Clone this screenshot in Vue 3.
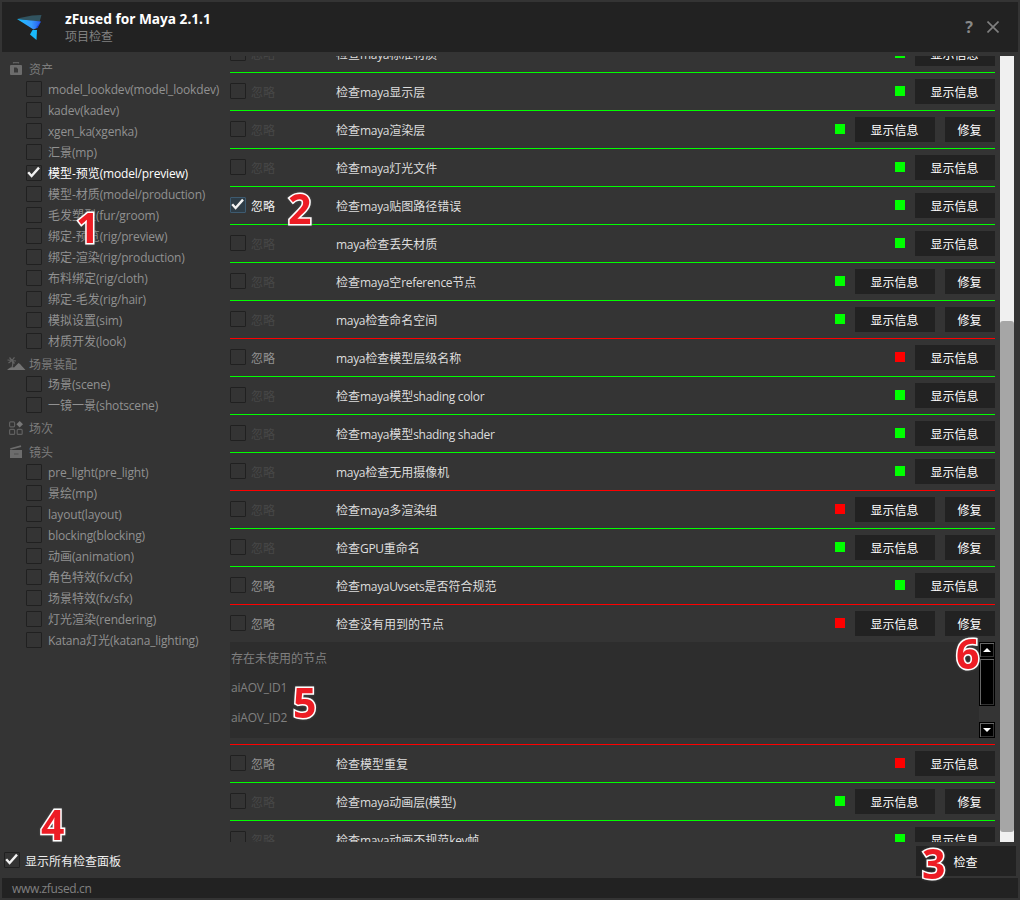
<script setup>
const groups = [
  {
    name: '资产', icon: 'asset',
    items: ['model_lookdev(model_lookdev)', 'kadev(kadev)', 'xgen_ka(xgenka)', '汇景(mp)', '模型-预览(model/preview)', '模型-材质(model/production)', '毛发塑型(fur/groom)', '绑定-预览(rig/preview)', '绑定-渲染(rig/production)', '布料绑定(rig/cloth)', '绑定-毛发(rig/hair)', '模拟设置(sim)', '材质开发(look)'],
  },
  { name: '场景装配', icon: 'scene', items: ['场景(scene)', '一镜一景(shotscene)'] },
  { name: '场次', icon: 'sequence', items: [] },
  {
    name: '镜头', icon: 'shot',
    items: ['pre_light(pre_light)', '景绘(mp)', 'layout(layout)', 'blocking(blocking)', '动画(animation)', '角色特效(fx/cfx)', '场景特效(fx/sfx)', '灯光渲染(rendering)', 'Katana灯光(katana_lighting)'],
  },
]
const selected = '模型-预览(model/preview)'

const checks = [
  { title: '检查maya标准材质' },
  { title: '检查maya显示层' },
  { title: '检查maya渲染层', fix: true },
  { title: '检查maya灯光文件' },
  { title: '检查maya贴图路径错误', checked: true },
  { title: 'maya检查丢失材质' },
  { title: '检查maya空reference节点', fix: true },
  { title: 'maya检查命名空间', fix: true },
  { title: 'maya检查模型层级名称', bad: true, enabled: true },
  { title: '检查maya模型shading color' },
  { title: '检查maya模型shading shader' },
  { title: 'maya检查无用摄像机' },
  { title: '检查maya多渲染组', fix: true, bad: true },
  { title: '检查GPU重命名', fix: true },
  { title: '检查mayaUvsets是否符合规范', enabled: true },
  { title: '检查没有用到的节点', fix: true, bad: true, enabled: true, log: ['存在未使用的节点', 'aiAOV_ID1', 'aiAOV_ID2'] },
  { title: '检查模型重复', bad: true, enabled: true },
  { title: '检查maya动画层(模型)', fix: true },
  { title: '检查maya动画不规范key帧' },
]
const tick = 'M2.2 8.2 L5.6 12 L13 3.6'

// Splits a label into Latin and CJK runs, so that Latin runs can be set tighter.
const runs = (text) =>
  text.match(/[\x20-\x7e]+|[^\x20-\x7e]+/g).map((t) => ({ t, latin: t.charCodeAt(0) < 127 }))
</script>

<template>
  <div class="window">
    <header class="titlebar">
      <svg class="logo" width="26" height="26" viewBox="0 0 26 26">
        <defs>
          <linearGradient id="wing" x1="0" x2="1" y1="0" y2="0">
            <stop offset="0" stop-color="#17c4ff" />
            <stop offset="0.6" stop-color="#379bff" />
            <stop offset="1" stop-color="#2456f0" />
          </linearGradient>
        </defs>
        <path d="M0 6.500 L15 3.500 L24.500 3 L22.500 10 Z" fill="#31535f" />
        <path d="M0 7 L24 9.500 L20 16 L16.500 17.500 Z" fill="url(#wing)" />
        <path d="M19 15.500 L24 9.500 L20.500 16 Z" fill="#1d45e0" />
        <path d="M15.500 18 L20 18 L19.500 28 L13 22.500 Z" fill="#19b9fb" />
      </svg>
      <div class="heading">
        <div class="app-name">zFused for Maya 2.1.1</div>
        <div class="sub">项目检查</div>
      </div>
      <div class="help">?</div>
      <svg class="close" width="12" height="12" viewBox="0 0 12 12"><path d="M.5 .5 L11.5 11.5 M11.5 .5 L.5 11.5" stroke="#808080" stroke-width="1.6" fill="none" /></svg>
    </header>

    <main class="body">
      <aside class="sidebar">
        <section v-for="g in groups" :key="g.name" class="group">
          <div class="group-head">
            <svg class="gicon" width="20" height="16" viewBox="0 0 20 16">
              <g v-if="g.icon === 'asset'">
                <path d="M7.500 1.500 V.6 H12.500 V1.500" stroke="#606060" stroke-width="1.2" fill="none" />
                <rect x="4" y="3" width="12" height="10" rx="1" fill="#6c6c6c" />
                <path d="M8 5.500 H10.500 L12 7 V10.500 H8 Z" fill="#393939" />
              </g>
              <g v-else-if="g.icon === 'scene'">
                <path d="M1 13 C3 11 5 10 6.500 10 L8 10.500 L12.500 6 L14 7 L19.500 13 Z" fill="#737373" />
                <path d="M6 10.500 C7 7.500 7 5 6 3.500 M6 3.500 L1.500 3 M6 3.500 L2.500 6 M6 3.500 L3.500 .5 M6 3.500 L8.500 .3 M6 3.500 L10 4 M6 3.500 L8.500 6.500" stroke="#626262" stroke-width="1.2" fill="none" />
              </g>
              <g v-else-if="g.icon === 'sequence'" fill="none" stroke="#606060" stroke-width="1.2">
                <rect x="3.600" y=".8" width="5" height="5" rx="1" />
                <rect x="3.600" y="8.400" width="5" height="5" rx="1" />
                <rect x="11.200" y="8.400" width="5" height="5" rx="1" />
                <path d="M13.700 0 L17 3.300 L13.700 6.600 L10.400 3.300 Z" fill="#777" stroke="none" />
              </g>
              <g v-else>
                <path d="M4.300 4 L15 1.200" stroke="#6c6c6c" stroke-width="1.800" />
                <path d="M4 5 H16 V13 H4 Z" fill="#6c6c6c" />
                <path d="M8 9 H12.500" stroke="#5b5b5b" stroke-width="1.600" />
              </g>
            </svg>
            <span>{{ g.name }}</span>
          </div>
          <div class="group-items">
            <div v-for="it in g.items" :key="it" class="item" :class="{ on: it === selected }">
              <span class="box"><svg v-if="it === selected" viewBox="0 0 16 16"><path :d="tick" /></svg></span>
              <span class="label"><span v-for="(r, i) in runs(it)" :key="i" :class="{ latin: r.latin }">{{ r.t }}</span></span>
            </div>
          </div>
        </section>
      </aside>

      <div class="scroll">
        <div class="list">
          <div v-for="c in checks" :key="c.title" class="check" :class="{ bad: c.bad }">
            <div class="row">
              <span class="box" :class="{ focus: c.checked }"><svg v-if="c.checked" viewBox="0 0 16 16"><path :d="tick" /></svg></span>
              <span class="ignore" :class="{ enabled: c.enabled, checked: c.checked }">忽略</span>
              <span class="title"><span v-for="(r, i) in runs(c.title)" :key="i" :class="{ latin: r.latin }">{{ r.t }}</span></span>
              <span class="status"></span>
              <span class="btn info">显示信息</span>
              <span v-if="c.fix" class="btn fix">修复</span>
            </div>
            <div v-if="c.log" class="log">
              <div class="log-lines"><p v-for="l in c.log" :key="l">{{ l }}</p></div>
              <div class="log-bar">
                <span class="arrow"><svg width="8" height="4" viewBox="0 0 8 4"><path d="M0 4 L4 0 L8 4Z" /></svg></span>
                <span class="handle"></span>
                <span class="arrow down"><svg width="8" height="4" viewBox="0 0 8 4"><path d="M0 0 L4 4 L8 0Z" /></svg></span>
              </div>
            </div>
          </div>
        </div>
      </div>
      <div class="bar"><div class="thumb"></div></div>
    </main>

    <div class="actions">
      <span class="box"><svg viewBox="0 0 16 16"><path :d="tick" /></svg></span>
      <span class="show-all">显示所有检查面板</span>
      <span class="run">检查</span>
    </div>
    <footer class="footer">www.zfused.cn</footer>

    <span class="mark m1">1</span>
    <span class="mark m2">2</span>
    <span class="mark m3">3</span>
    <span class="mark m4">4</span>
    <span class="mark m5">5</span>
    <span class="mark m6">6</span>
  </div>
</template>

<style>
body { background: #343434; }
</style>

<style scoped>
.window {
  position: relative;
  box-sizing: border-box;
  width: 1020px;
  height: 900px;
  padding: 2px;
  overflow: hidden;
  display: flex;
  flex-direction: column;
  background: #343434;
  color: #919191;
  font: 12px/16px "Open Sans", "Noto Sans CJK SC", sans-serif;
  white-space: nowrap;
}
.titlebar { height: 50px; flex: none; display: flex; background: #222; }
.logo { margin: 10px 0 0 15px; overflow: visible; }
.heading { flex: 1; margin: 8px 0 0 22px; }
.app-name { font: 700 13.7px/18px "Noto Sans", sans-serif; color: #fff; }
.sub { line-height: 17px; color: #808080; }
.help { margin: 16px 14px 0 0; font: 700 16px/18px "Noto Sans", sans-serif; color: #888; }
.close { margin: 19px 19px 0 0; }
.body { height: 786px; flex: none; margin-top: 4px; display: flex; }
.sidebar { width: 228px; flex: none; padding-top: 4px; box-sizing: border-box; }
.group { margin-bottom: 3px; }
.group-head { height: 19px; display: flex; align-items: center; color: #7c7c7c; }
.gicon { margin: 0 3px 0 4px; }
.group-items { min-height: 2px; }
.item { display: flex; box-sizing: border-box; height: 21px; padding: 2px 0 3px 24px; }
.item .label { margin: 1px 0 0 6px; }
.item.on { color: #fff; }
.label .latin { letter-spacing: -0.18px; }
.title .latin { letter-spacing: -0.32px; }
.box {
  box-sizing: border-box;
  width: 16px;
  height: 16px;
  flex: none;
  border: 1px solid #202020;
  border-radius: 1px;
  background: #343434;
}
.box svg { display: block; width: 16px; height: 16px; margin: -2px 0 0 -1px; fill: none; stroke: #f2f2f2; stroke-width: 2.4; }
.box.focus { border-color: #3d5a70; background: #2e3c46; }
.scroll { width: 765px; height: 786px; overflow: hidden; }
.list { margin-top: -22px; }
.check { border-top: 1px solid #0f0; }
.check.bad { border-top-color: #f00; }
.row { display: flex; align-items: center; height: 37px; }
.row .box { margin-bottom: 1px; }
.ignore { width: 85px; margin-left: 5px; padding-top: 2px; color: #474747; }
.ignore.enabled { color: #919191; }
.ignore.checked { color: #f0f0f0; }
.title { flex: 1; padding-top: 2px; color: #ddd; }
.status { width: 10px; height: 10px; margin: 0 10px 1px 0; background: #0f0; }
.bad .status { background: #f00; }
.btn { height: 25px; line-height: 28px; text-align: center; text-indent: -1px; background: #222; color: #fff; }
.info { width: 80px; }
.fix { width: 50px; margin-left: 10px; }
.log { height: 96px; margin-bottom: 6px; display: flex; background: #2d2d2d; color: #808080; }
.log-lines { flex: 1; padding-top: 2px; }
.log-lines p { margin: 0 0 0 1px; height: 30px; line-height: 29px; letter-spacing: -0.2px; }
.log-lines p:first-child { height: 29px; letter-spacing: 0; }
.log-bar { width: 16px; display: flex; flex-direction: column; background: #343434; }
.arrow, .handle { box-sizing: border-box; background: #000; border: 1px solid #000; box-shadow: inset 1px 1px #686868, inset -1px -1px #333; }
.arrow { display: flex; align-items: center; justify-content: center; height: 16px; }
.arrow svg { fill: #fff; }
.handle { height: 48px; }
.down { margin-top: auto; }
.bar { width: 14px; margin-left: 5px; background: #f0f0f0; }
.thumb { margin-top: 265px; height: 511px; border-radius: 3px; background: #a6a6a6; }
.actions { height: 36px; flex: none; display: flex; align-items: flex-start; }
.actions .box { margin: 10px 5px 0 2px; }
.show-all { flex: 1; margin-top: 12px; color: #eee; }
.run { width: 100px; height: 30px; margin: 4px 2px 0 0; line-height: 34px; text-align: center; text-indent: -1px; color: #fff; background: #222; }
.footer { height: 20px; flex: none; padding-left: 10px; line-height: 22px; letter-spacing: -0.36px; background: #222; color: #808080; }
.mark {
  position: absolute;
  font: 700 41px/40px "Noto Sans", sans-serif;
  color: #ed1c24;
  -webkit-text-stroke: 3px #fff;
  paint-order: stroke fill;
  filter: drop-shadow(0 0 1px #555);
}
.m1 { left: 76px; top: 207px; }
.m2 { left: 288px; top: 188px; }
.m3 { left: 922px; top: 843px; }
.m4 { left: 41px; top: 804px; }
.m5 { left: 293px; top: 682px; }
.m6 { left: 956px; top: 633px; }
</style>
